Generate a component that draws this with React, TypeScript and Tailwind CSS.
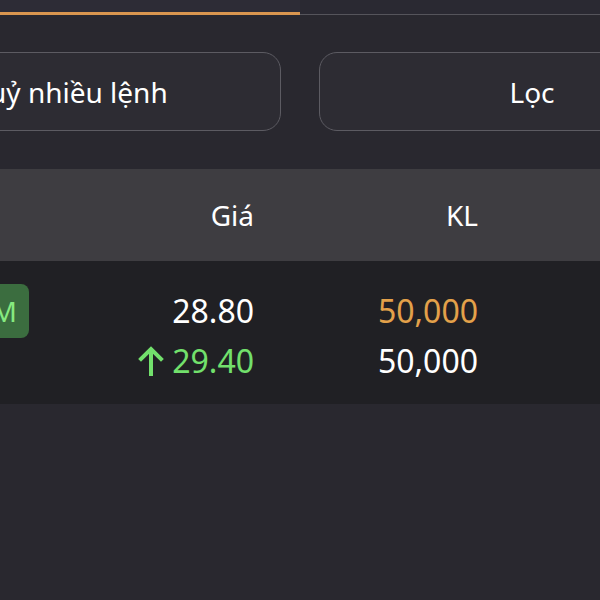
import React from "react";

export default function App() {
  return (
    <div
      className="w-[600px] h-[600px] overflow-hidden bg-[#29282f] text-white"
      style={{ fontFamily: '"Noto Sans", "Open Sans", sans-serif' }}
    >
      {/* tabs */}
      <div className="flex h-[15px] bg-[#2a2932]">
        <div className="w-[300px] border-b-[3px] border-[#d9964f] bg-[#2d2c36]" />
        <div className="flex-1 border-b border-[#55545b]" />
      </div>

      {/* buttons */}
      <div className="flex gap-[38px] ml-[-145px] pt-[37px] pb-[38px]">
        <div className="w-[426px] h-[79px] shrink-0 rounded-[18px] border border-[#5c5b62] bg-[#2d2c33] flex items-center justify-center text-[28px]">
          Huỷ nhiều lệnh
        </div>
        <div className="w-[426px] h-[79px] shrink-0 rounded-[18px] border border-[#5c5b62] bg-[#2d2c33] flex items-center justify-center text-[28px]">
          Lọc
        </div>
      </div>

      {/* header */}
      <div className="h-[92px] bg-[#3e3d41] flex items-center text-[28px]">
        <div className="w-[254px] text-right">Giá</div>
        <div className="w-[224px] text-right">KL</div>
      </div>

      {/* row */}
      <div className="h-[143px] bg-[#202024] flex">
        <div className="w-[254px] relative">
          <div className="absolute left-[-30px] top-[23px] w-[59px] h-[54px] rounded-[8px] bg-[#3b6d3f] text-[#86ea80] text-[28px] flex items-center justify-end pr-[12px]">
            M
          </div>
          <div className="flex flex-col items-end pt-[25px] text-[32px] leading-[50px]">
            <div className="h-[50px]">28.80</div>
            <div className="h-[50px] flex items-center text-[#72e06c]">
              <svg width="26" height="30" viewBox="0 0 26 30" className="mr-[8px]" fill="none" stroke="#72e06c" strokeWidth="4" strokeLinecap="square">
                <path d="M13 28 V4" />
                <path d="M3 13 L13 3 L23 13" strokeLinejoin="miter" />
              </svg>
              29.40
            </div>
          </div>
        </div>
        <div className="w-[224px] flex flex-col items-end pt-[25px] text-[32px] leading-[50px]">
          <div className="h-[50px] text-[#e3a14a]">50,000</div>
          <div className="h-[50px]">50,000</div>
        </div>
      </div>
    </div>
  );
}
